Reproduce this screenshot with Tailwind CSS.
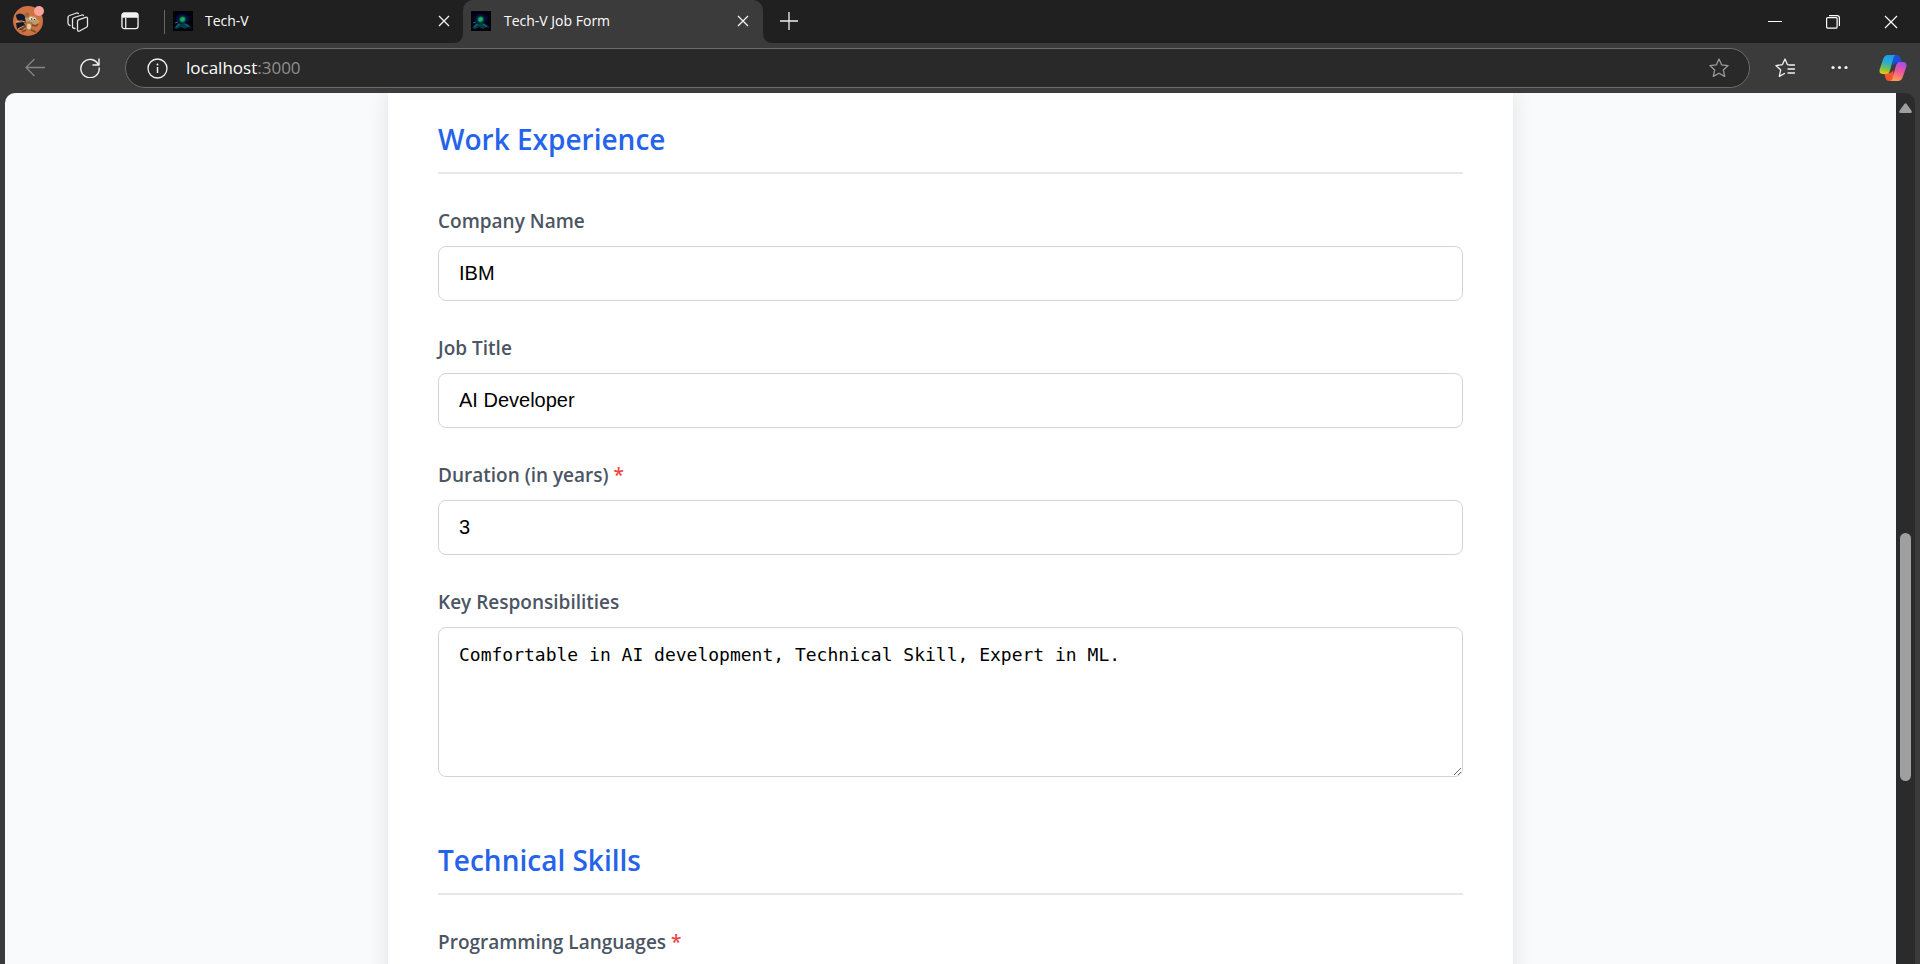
<!DOCTYPE html>
<html lang="en">
<head>
<meta charset="utf-8">
<title>Tech-V Job Form</title>
<script src="https://cdn.jsdelivr.net/npm/@tailwindcss/browser@4"></script>
</head>
<body class="flex h-screen flex-col overflow-hidden bg-[#3b3b3b] font-['Segoe_UI','Open_Sans','Noto_Sans',sans-serif] text-white">

<svg class="absolute size-0" aria-hidden="true">
  <defs>
    <radialGradient id="glow"><stop offset="0" stop-color="#12b552"/><stop offset=".4" stop-color="#0a8a55"/><stop offset="1" stop-color="#04203a" stop-opacity="0"/></radialGradient>
    <symbol id="favicon" viewBox="0 0 20 20">
      <rect width="20" height="20" fill="#02020a"/>
      <path d="M3 6q3-4 9-3l5 3-1 4-5 3-7 1z" fill="#07083f"/>
      <circle cx="9.500" cy="8.500" r="5" fill="url(#glow)"/>
      <path d="M1 17l4-5 3 1 3-1 4 1 4 4-4-1-3 2-4-2-4 2z" fill="#053a48"/>
      <path d="M3 16l4-3M12 13l4 3M2 12l3-1" stroke="#087a78" fill="none"/>
      <path d="M7.500 8l2-2 2.500 1-1 2.500-3 1z" fill="#14b84b"/>
    </symbol>
    <symbol id="cross" viewBox="0 0 12 12"><path d="M1 1l10 10M11 1L1 11" stroke="#f2f2f2" stroke-width="1.300" fill="none"/></symbol>
  </defs>
</svg>

<header class="shrink-0">
  <div class="flex h-[43px] bg-[#202020]">
    <button class="ml-3 mt-1.5 size-8 shrink-0" aria-label="Profile">
      <svg class="size-8" viewBox="0 0 32 32">
        <circle cx="16" cy="15" r="15" fill="#cf7243"/>
        <path d="M4 9q4-3 8 0l4 5-3 3-6-2q-3-2-3-6zM4 17l7-1 3 4-4 4-5-1z" fill="#15182c"/>
        <path d="M4 16q5-2 9 0M6 23l6-3" stroke="#d9a066" stroke-width="1.200" fill="none"/>
        <path d="M13 12l2-4 4 2 3 0 3 3 3 2-3 3-6 1-5-2z" fill="#c39a6a"/>
        <circle cx="15" cy="9" r="2.600" fill="#9c6a3e"/>
        <ellipse cx="17" cy="20" rx="4.500" ry="4.500" fill="#a87444"/>
        <ellipse cx="17" cy="20.500" rx="2.200" ry="3" fill="#e2c99c"/>
        <circle cx="19" cy="12.500" r="1.800" fill="#f3ead8"/><circle cx="22.500" cy="13" r="1.500" fill="#f3ead8"/>
        <circle cx="19.500" cy="13" r=".8" fill="#222"/><circle cx="22.500" cy="13.500" r=".8" fill="#222"/>
        <path d="M14 20l-5 3M20 19l4 1 2-2M14 24l-4 2M19 24l5 2" stroke="#7b4a26" stroke-width="1.500" fill="none"/>
        <circle cx="27" cy="5" r="5" fill="#f9a39b"/>
      </svg>
    </button>
    <button class="ml-[23px] mt-3 h-5 w-[22px] shrink-0" aria-label="Workspaces">
      <svg class="h-5 w-[22px]" viewBox="0 0 22 20" fill="none" stroke="#e6e6e6" stroke-width="1.300" stroke-linejoin="round" stroke-linecap="round">
        <path d="M10.500 9.500q0-1.200 1-1.600l7-2.600q2-.6 2 1.200v7.200q0 1-1 1.600l-6.500 3.500q-2.500 1.200-2.500-1z"/>
        <path d="M8 16.500q-2.500 0-2.500-2V7.500q0-1.500 1.500-2l8-2.500q1-.3 1.500.5"/>
        <path d="M3 13.500q-2-.5-2-2.500V5.500Q1 4 2.500 3.500l7-2.500q1-.3 1.800.5"/>
      </svg>
    </button>
    <button class="ml-8 mt-3 size-[18px] shrink-0" aria-label="Tab actions">
      <svg class="size-[18px]" viewBox="0 0 19 19"><rect x="1" y="1" width="17" height="16.500" rx="2.500" fill="none" stroke="#f2f2f2" stroke-width="1.400"/><path d="M1 6V3q0-2 2-2h13q2 0 2 2v3z" fill="#f2f2f2"/><path d="M5 6v11" stroke="#f2f2f2" stroke-width="1.300"/></svg>
    </button>
    <div class="ml-[25px] mt-2.5 h-6 w-px shrink-0 bg-[#666]"></div>
    <div class="flex w-[298px] shrink-0 items-center pb-0.5 pl-2 pr-[13px]">
      <svg class="size-5"><use href="#favicon"/></svg>
      <span class="ml-3 flex-1 text-[14px] leading-5">Tech-V</span>
      <button aria-label="Close Tech-V tab"><svg class="size-3"><use href="#cross"/></svg></button>
    </div>
    <div class="relative flex w-[300px] shrink-0 items-center rounded-t-[10px] bg-[#3b3b3b] pb-0.5 pl-2 pr-3.5">
      <svg class="absolute -left-2.5 bottom-0 size-2.5" viewBox="0 0 10 10"><path d="M10 0v10H0Q10 10 10 0" fill="#3b3b3b"/></svg>
      <svg class="absolute -right-2.5 bottom-0 size-2.5" viewBox="0 0 10 10"><path d="M0 0v10h10Q0 10 0 0" fill="#3b3b3b"/></svg>
      <svg class="size-5"><use href="#favicon"/></svg>
      <span class="ml-[13px] flex-1 text-[14px] leading-5">Tech-V Job Form</span>
      <button aria-label="Close Tech-V Job Form tab"><svg class="size-3"><use href="#cross"/></svg></button>
    </div>
    <button class="ml-[17px] mt-3 size-[18px]" aria-label="New tab"><svg class="size-[18px]" viewBox="0 0 18 18"><path d="M9 0v18M0 9h18" stroke="#eee" stroke-width="1.300"/></svg></button>
    <div class="ml-auto flex items-center gap-11 pr-[22px]">
      <button aria-label="Minimize"><svg class="size-3.5" viewBox="0 0 14 14"><path d="M0 6.500h14" stroke="#fff"/></svg></button>
      <button aria-label="Restore"><svg class="size-3.5" viewBox="0 0 14 14" fill="none" stroke="#fff" stroke-width="1.200"><rect x=".6" y="2.600" width="10.500" height="10.500" rx="1"/><path d="M3 .6h8q2.400 0 2.400 2.400v8"/></svg></button>
      <button aria-label="Close window"><svg class="size-3.5" viewBox="0 0 14 14"><path d="M1 1l12 12M13 1L1 13" stroke="#fff" stroke-width="1.200"/></svg></button>
    </div>
  </div>

  <div class="flex h-[50px] items-center bg-[#3b3b3b] pl-[25px] pr-[13px]">
    <button class="shrink-0" aria-label="Back"><svg class="size-5" viewBox="0 0 20 20" fill="none" stroke="#858585" stroke-width="1.300"><path d="M20 9.500H1M9.500 1L1 9.500 9.500 18"/></svg></button>
    <button class="ml-[35px] shrink-0" aria-label="Refresh"><svg class="size-5" viewBox="0 0 20 20" fill="none" stroke="#f2f2f2" stroke-width="1.400"><path d="M18.500 7A9.200 9.200 0 1 0 19.200 10M19 1v6h-6" stroke-linecap="round" stroke-linejoin="round"/></svg></button>
    <div class="ml-[25px] flex h-10 flex-1 items-center rounded-full border border-[#6b6b6b] bg-[#292929] pl-[21px] pr-5">
      <svg class="size-[21px] shrink-0" viewBox="0 0 21 21"><circle cx="10.500" cy="10.500" r="9.500" fill="none" stroke="#f2f2f2" stroke-width="1.300"/><path d="M10.500 9v6" stroke="#f2f2f2" stroke-width="1.500"/><circle cx="10.500" cy="6.500" r="1" fill="#f2f2f2"/></svg>
      <a href="#" class="ml-[18px] text-[17px] leading-6">localhost<span class="text-[#8f8f8f]">:3000</span></a>
      <button class="ml-auto" aria-label="Add to favorites"><svg class="size-5" viewBox="0 0 20 20"><path d="M10 1l2.700 5.900 6.400.7-4.800 4.300 1.400 6.500L10 15.200l-5.700 3.200 1.400-6.500L.9 7.600l6.400-.7z" fill="none" stroke="#9a9a9a" stroke-width="1.300" stroke-linejoin="round"/></svg></button>
    </div>
    <button class="ml-[25px] shrink-0" aria-label="Favorites"><svg class="size-5" viewBox="0 0 20 20" fill="none" stroke="#f2f2f2" stroke-width="1.300" stroke-linejoin="round" stroke-linecap="round"><path d="M15 7l-2.500-.3L10 1 7.300 6.700.9 7.600l4.800 4.300-1.400 6.500L9.500 15.500M14.500 7h5M13 11h6.500M13 15h6.500"/></svg></button>
    <button class="ml-9 shrink-0" aria-label="Settings and more"><svg class="h-5 w-[17px]" viewBox="0 0 17 20" fill="#f2f2f2"><circle cx="2" cy="9.500" r="1.600"/><circle cx="8.500" cy="9.500" r="1.600"/><circle cx="15" cy="9.500" r="1.600"/></svg></button>
    <button class="ml-[31px] shrink-0" aria-label="Copilot">
      <svg class="h-[26px] w-7" viewBox="0 0 28 26">
        <defs>
          <linearGradient id="cpA" x1=".4" y1="0" x2=".2" y2="1"><stop offset="0" stop-color="#1c9bf0"/><stop offset=".4" stop-color="#2bb0c8"/><stop offset=".7" stop-color="#7cbf4a"/><stop offset="1" stop-color="#f4c80c"/></linearGradient>
          <linearGradient id="cpB" x1=".7" y1="0" x2=".4" y2="1"><stop offset="0" stop-color="#a34df0"/><stop offset=".5" stop-color="#f0569a"/><stop offset="1" stop-color="#ffa04f"/></linearGradient>
        </defs>
        <path d="M12 0h6q2.500 0 3.300 2.600L23 8h-5q-3 0-4 3z" fill="#1b4fd8"/>
        <path d="M16 26h-6q-2.500 0-3.300-2.600L5 18h5q3 0 4-3z" fill="#f2552c"/>
        <path d="M17 0H9Q5.500 0 4.200 4L.8 14Q-.5 19 4 19h3q3 0 4-3.500l3-11Q15 0 17 0z" fill="url(#cpA)"/>
        <path d="M11 26h8q3.500 0 4.800-4l3.400-10q1.300-5-3.200-5h-3q-3 0-4 3.500l-3 11Q13 26 11 26z" fill="url(#cpB)"/>
      </svg>
    </button>
  </div>
</header>

<div class="flex min-h-0 flex-1 px-[5px]">
  <main class="min-w-0 flex-1 overflow-hidden rounded-tl-[10px] bg-[#f9fafc]">
    <form class="mx-auto w-full max-w-[1125px] bg-white px-[50px] pb-10 pt-[25px] text-[#4b5563] shadow-[0_0_20px_rgba(0,0,0,0.1)]">
      <section>
        <h2 class="mb-[35px] border-b-2 border-[#e5e7eb] pb-3 text-[28px] font-semibold leading-[42px] text-[#2563eb]">Work Experience</h2>
        <div class="flex flex-col gap-[35px]">
          <div class="flex flex-col gap-3">
            <label for="company" class="text-[19px] font-semibold leading-[25px]">Company Name</label>
            <input id="company" type="text" value="IBM" class="h-[55px] w-full rounded-lg border border-[#d1d5db] bg-white px-5 font-['Liberation_Sans',Arial,sans-serif] text-[20px] text-black">
          </div>
          <div class="flex flex-col gap-3">
            <label for="title" class="text-[19px] font-semibold leading-[25px]">Job Title</label>
            <input id="title" type="text" value="AI Developer" class="h-[55px] w-full rounded-lg border border-[#d1d5db] bg-white px-5 font-['Liberation_Sans',Arial,sans-serif] text-[20px] text-black">
          </div>
          <div class="flex flex-col gap-3">
            <label for="duration" class="text-[19px] font-semibold leading-[25px]">Duration (in years) <span class="text-[#ef4444]">*</span></label>
            <input id="duration" type="text" inputmode="numeric" value="3" class="h-[55px] w-full rounded-lg border border-[#d1d5db] bg-white px-5 font-['Liberation_Sans',Arial,sans-serif] text-[20px] text-black">
          </div>
          <div class="flex flex-col gap-3">
            <label for="duties" class="text-[19px] font-semibold leading-[25px]">Key Responsibilities</label>
            <textarea id="duties" class="h-[150px] w-full resize-y rounded-lg border border-[#d1d5db] bg-white px-5 py-[15px] font-['DejaVu_Sans_Mono',monospace] text-[18px] leading-6 text-black">Comfortable in AI development, Technical Skill, Expert in ML.</textarea>
          </div>
        </div>
      </section>
      <section class="mt-[62px]">
        <h2 class="mb-[35px] border-b-2 border-[#e5e7eb] pb-3 text-[28px] font-semibold leading-[42px] text-[#2563eb]">Technical Skills</h2>
        <label for="languages" class="mb-3 block text-[19px] font-semibold leading-[25px]">Programming Languages <span class="text-[#ef4444]">*</span></label>
        <input id="languages" type="text" class="h-[55px] w-full rounded-lg border border-[#d1d5db] bg-white px-5 text-[20px] text-black">
      </section>
    </form>
  </main>
  <div class="relative w-[19px] shrink-0 rounded-tr-[10px] bg-[#2b2b2b]" aria-hidden="true">
    <svg class="absolute left-[3px] top-2.5 h-2.5 w-[13px]" viewBox="0 0 13 10"><path d="M5.500.8q1-1 2 0l5 7Q13.500 10 11.500 10h-10Q-.5 10 .5 7.800z" fill="#9f9f9f"/></svg>
    <div class="absolute left-1 top-[440px] h-[248px] w-[11px] rounded-full bg-[#9f9f9f]"></div>
  </div>
</div>
</body>
</html>
